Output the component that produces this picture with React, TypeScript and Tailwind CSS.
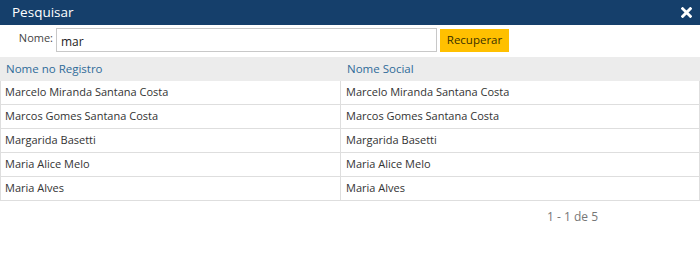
import React from 'react';

const rows = [
  ['Marcelo Miranda Santana Costa', 'Marcelo Miranda Santana Costa'],
  ['Marcos Gomes Santana Costa', 'Marcos Gomes Santana Costa'],
  ['Margarida Basetti', 'Margarida Basetti'],
  ['Maria Alice Melo', 'Maria Alice Melo'],
  ['Maria Alves', 'Maria Alves'],
];

export default function App() {
  return (
    <div className="w-[700px] h-[270px] bg-white font-['Open_Sans',sans-serif] text-[#333]">
      {/* Title bar */}
      <div className="h-[25px] bg-[#153f6b] flex items-center justify-between pl-[12px] pr-[8px]">
        <span className="text-white text-[13.5px] leading-none">Pesquisar</span>
        <svg width="11" height="11" viewBox="0 0 10 10" className="text-white">
          <path d="M1.5 1.5 L8.5 8.5 M8.5 1.5 L1.5 8.5" stroke="currentColor" strokeWidth="2.6" strokeLinecap="square" />
        </svg>
      </div>

      {/* Search */}
      <div className="flex items-center h-[24px] mt-[3px]">
        <label className="w-[53px] text-right text-[11px] text-[#444] self-start pt-[2px]">Nome:</label>
        <input
          defaultValue="mar"
          className="ml-[3px] w-[381px] h-[24px] border border-[#c8c8c8] px-[4px] pt-[3px] text-[12px] text-[#222] outline-none"
        />
        <button className="ml-[3px] w-[69px] h-[23px] bg-[#ffc000] text-[11.5px] text-[#3a3000]">Recuperar</button>
      </div>

      {/* Table */}
      <div className="mt-[5px] w-[700px]">
        <div className="grid grid-cols-[341px_1fr] h-[24px] bg-[#ececec] text-[11.5px] text-[#2f6b99] items-center">
          <div className="pl-[6px]">Nome no Registro</div>
          <div className="pl-[6px]">Nome Social</div>
        </div>
        <div className="border-l border-r border-[#dedede]">
          {rows.map(([a, b]) => (
            <div key={a} className="grid grid-cols-[340px_1fr] h-[24px] border-b border-[#dedede] text-[11px] text-[#333] items-center">
              <div className="pl-[4px] border-r border-[#dedede] h-full flex items-center">{a}</div>
              <div className="pl-[5px]">{b}</div>
            </div>
          ))}
        </div>
        <div className="flex justify-end pr-[102px] pt-[7px] text-[12px] text-[#777]">1 - 1 de 5</div>
      </div>
    </div>
  );
}
